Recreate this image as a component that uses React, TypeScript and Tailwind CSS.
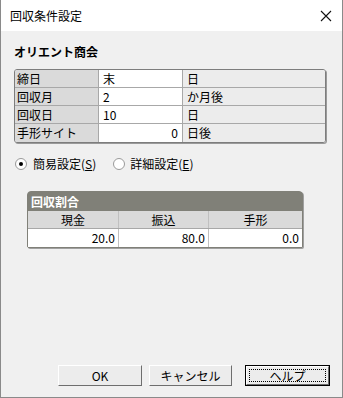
import React from 'react'

const font = { fontFamily: '"Noto Sans CJK JP", "Liberation Sans", sans-serif' }

const rows = [
  { label: '締日', value: '末', unit: '日', right: false },
  { label: '回収月', value: '2', unit: 'か月後', right: false },
  { label: '回収日', value: '10', unit: '日', right: false },
  { label: '手形サイト', value: '0', unit: '日後', right: true },
]

const Radio = ({ checked }: { checked?: boolean }) => (
  <span className="w-[12px] h-[12px] rounded-full border border-[#9a9a9a] bg-white flex items-center justify-center">
    {checked && <span className="w-[4px] h-[4px] rounded-full bg-black" />}
  </span>
)

const Button = ({ label, active, className }: { label: string; active?: boolean; className?: string }) => (
  <div className={`${className} h-[21px] ${active ? 'border border-black' : ''}`}>
    <div className="h-full border-t border-l border-white border-r border-b border-r-[#6e6e6e] border-b-[#6e6e6e] bg-[#ececec] flex items-center justify-center p-[2px]">
      <div className={`w-full h-full flex items-center justify-center text-[12px] leading-none ${active ? 'border border-dotted border-black' : ''}`}>
        {label}
      </div>
    </div>
  </div>
)

export default function App() {
  return (
    <div style={font} className="w-[343px] h-[398px] flex flex-col border-x border-b border-[#8a8a8a] text-black">
      <div className="h-[31px] bg-white flex items-center justify-between pl-[9px] pr-[10px] shrink-0">
        <span className="text-[12px]">回収条件設定</span>
        <svg width="12" height="12" viewBox="0 0 12 12">
          <path d="M1 1 L11 11 M11 1 L1 11" stroke="#111" strokeWidth="1.1" />
        </svg>
      </div>
      <div className="flex-1 bg-[#f0f0f0] flex flex-col px-[13px]">
        <div className="mt-[14px] h-[14px] leading-[14px] text-[12px] font-bold">オリエント商会</div>
        <div className="mt-[10px] w-[312px] border border-[#7d7d7d] rounded-[3px] shadow-[1px_1px_0_#9a9a9a] overflow-hidden">
          {rows.map((r, i) => (
            <div
              key={r.label}
              className={`grid grid-cols-[84px_84px_1fr] h-[18px] text-[12px] leading-[17px] ${i < rows.length - 1 ? 'border-b border-[#a8a8a8]' : ''}`}
            >
              <div className="bg-[#dadada] pl-[2px] border-r border-[#a8a8a8]">{r.label}</div>
              <div className={`bg-white border-r border-[#a8a8a8] ${r.right ? 'text-right pr-[4px]' : 'pl-[4px]'}`}>{r.value}</div>
              <div className="bg-[#ececec] pl-[4px]">{r.unit}</div>
            </div>
          ))}
        </div>
        <div className="mt-[14px] h-[14px] flex items-center text-[12px] pl-[1px]">
          <Radio checked />
          <span className="ml-[6px]">
            簡易設定(<span className="underline">S</span>)
          </span>
          <span className="ml-[17px]">
            <Radio />
          </span>
          <span className="ml-[5px]">
            詳細設定(<span className="underline">E</span>)
          </span>
        </div>
        <div className="mt-[20px] ml-[13px] w-[276px] rounded-t-[4px] rounded-b-[2px] bg-[#808078] border border-[#808078] shadow-[1px_1px_0_#a0a0a0]">
          <div className="h-[19px] leading-[19px] pl-[3px] text-white font-bold text-[12px]">回収割合</div>
          <div className="grid grid-cols-[91px_90px_1fr] h-[18px] text-[12px] leading-[17px] bg-[#dadada] border-b border-[#a8a8a8] text-center">
            <div className="border-r border-[#c0c0c0]">現金</div>
            <div className="border-r border-[#c0c0c0]">振込</div>
            <div>手形</div>
          </div>
          <div className="grid grid-cols-[91px_90px_1fr] h-[18px] text-[12px] leading-[17px] bg-white text-right">
            <div className="border-r border-[#c0c0c0] pr-[3px]">20.0</div>
            <div className="border-r border-[#c0c0c0] pr-[3px]">80.0</div>
            <div className="pr-[3px]">0.0</div>
          </div>
        </div>
        <div className="mt-auto mb-[11px] flex justify-end">
          <Button label="OK" className="w-[84px]" />
          <Button label="キャンセル" className="w-[83px] ml-[7px]" />
          <Button label="ヘルプ" active className="w-[85px] ml-[13px] mr-[-1px]" />
        </div>
      </div>
    </div>
  )
}
